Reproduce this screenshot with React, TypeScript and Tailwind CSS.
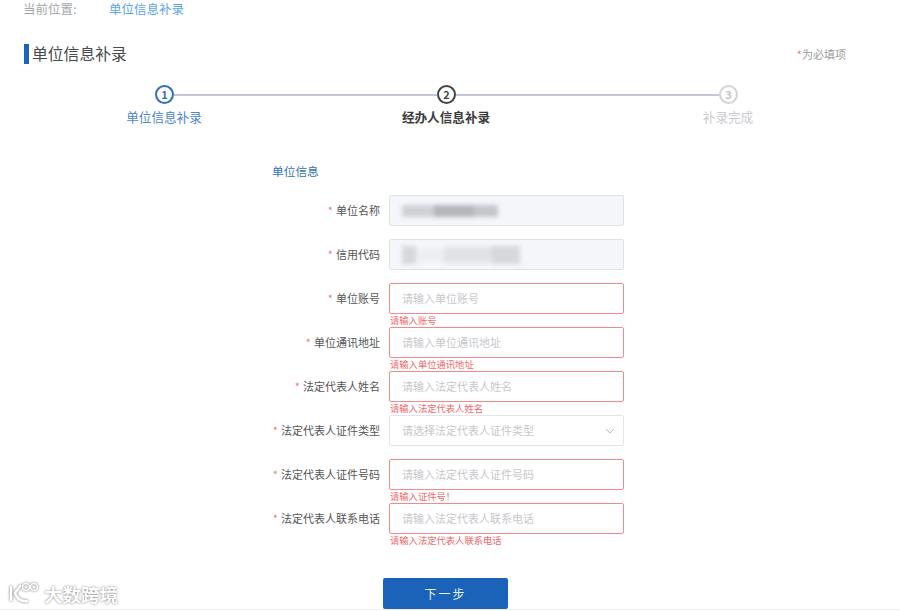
const fields = [
  { label: '单位名称', blur: 'name' },
  { label: '信用代码', blur: 'code' },
  { label: '单位账号', placeholder: '请输入单位账号', error: '请输入账号' },
  { label: '单位通讯地址', placeholder: '请输入单位通讯地址', error: '请输入单位通讯地址' },
  { label: '法定代表人姓名', placeholder: '请输入法定代表人姓名', error: '请输入法定代表人姓名' },
  { label: '法定代表人证件类型', placeholder: '请选择法定代表人证件类型', select: true },
  { label: '法定代表人证件号码', placeholder: '请输入法定代表人证件号码', error: '请输入证件号！' },
  { label: '法定代表人联系电话', placeholder: '请输入法定代表人联系电话', error: '请输入法定代表人联系电话' },
];

function StepDot({ n, className }: { n: number; className: string }) {
  return (
    <div className={`flex h-[19px] w-[19px] shrink-0 items-center justify-center rounded-full border-2 text-[11px] font-bold leading-none ${className}`}>
      {n}
    </div>
  );
}

function Field({ field }: { field: (typeof fields)[number] }) {
  const boxClass = field.blur
    ? 'border-[#dfe3e8] bg-[#f4f6f9]'
    : field.error
      ? 'border-[#f28b8b] bg-white'
      : 'border-[#e3e5e8] bg-white';

  return (
    <div className="flex h-[44px] items-start">
      <div className="flex h-[31px] w-[117px] items-center justify-end whitespace-nowrap text-[11px] text-[#555]">
        <span className="mr-[3px] text-[#ef7b7b]">*</span>
        {field.label}
      </div>
      <div className="ml-[9px] w-[235px]">
        <div className={`flex h-[31px] items-center justify-between rounded-[2px] border pl-[12px] pr-[8px] text-[11px] text-[#c6c8cc] ${boxClass}`}>
          {field.blur === 'name' && (
            <div className="flex h-[12px] items-center blur-[2px]">
              <div className="h-[12px] w-[32px] bg-[#cfd1d6]" />
              <div className="h-[12px] w-[40px] bg-[#b4b6bb]" />
              <div className="h-[12px] w-[24px] bg-[#c4c6cb]" />
            </div>
          )}
          {field.blur === 'code' && (
            <div className="flex h-[18px] items-center blur-[2px]">
              <div className="h-[18px] w-[14px] bg-[#d6d8dc]" />
              <div className="h-[12px] w-[28px] bg-[#eceef1]" />
              <div className="h-[16px] w-[48px] bg-[#e0e2e6]" />
              <div className="h-[18px] w-[28px] bg-[#d6d8dc]" />
            </div>
          )}
          {field.placeholder}
          {field.select && (
            <svg width="10" height="6" viewBox="0 0 10 6" fill="none" stroke="#b9bbc0" strokeWidth="1">
              <path d="M1 1l4 4 4-4" />
            </svg>
          )}
        </div>
        {field.error && (
          <div className="whitespace-nowrap pl-[1px] text-[9.3px] leading-[12px] text-[#f0686c]">{field.error}</div>
        )}
      </div>
    </div>
  );
}

export default function App() {
  return (
    <div className="relative h-[611px] w-[900px] overflow-hidden bg-white font-['Noto_Sans_CJK_SC','Noto_Sans',sans-serif]">
      {/* Breadcrumb */}
      <div className="flex h-[19px] items-center pl-[23px] text-[12.5px]">
        <span className="w-[86px] text-[#a3a6ab]">当前位置:</span>
        <span className="text-[#5ba4ec]">单位信息补录</span>
      </div>

      {/* Title */}
      <div className="mt-[25px] flex h-[20px] items-center justify-between pl-[24px] pr-[54px]">
        <div className="flex items-center">
          <div className="h-[20px] w-[5px] bg-[#1c64b8]" />
          <span className="ml-[3px] text-[15.8px] text-[#4a4a4a]">单位信息补录</span>
        </div>
        <div className="text-[11px] text-[#9a9a9a]">
          <span className="text-[#ef7b7b]">*</span>为必填项
        </div>
      </div>

      {/* Steps */}
      <div className="ml-[155px] mt-[21px] flex w-[583px] items-center">
        <StepDot n={1} className="border-[#2f6fb8] text-[#2f6fb8]" />
        <div className="h-[2px] flex-1 bg-[#c4c7d4]" />
        <StepDot n={2} className="border-[#444] text-[#444]" />
        <div className="h-[2px] flex-1 bg-[#c4c7d4]" />
        <StepDot n={3} className="border-[#d2d4d8] text-[#c4c6ca]" />
      </div>
      <div className="ml-[23px] mt-[4px] grid w-[846px] grid-cols-3 text-center text-[12.6px] leading-[18px]">
        <span className="text-[#4d87c7]">单位信息补录</span>
        <span className="font-bold text-[#3c3c3c]">经办人信息补录</span>
        <span className="text-[#c9cbcf]">补录完成</span>
      </div>

      {/* Form */}
      <div className="ml-[263px] mt-[37px]">
        <div className="ml-[9px] h-[15px] text-[11.7px] leading-[15px] text-[#2f6fb8]">单位信息</div>
        <div className="mt-[17px]">
          {fields.map((field) => (
            <Field key={field.label} field={field} />
          ))}
        </div>
      </div>

      <div className="ml-[383px] mt-[31px] flex h-[31px] w-[125px] items-center justify-center rounded-[2px] bg-[#1a63b8] text-[12px] tracking-[2px] text-[#e8eff8]">
        下一步
      </div>
      <div className="h-[1px] bg-[#eceef0]" />

      {/* Watermark */}
      <div className="absolute bottom-[4px] left-[8px] flex items-center">
        <svg width="34" height="26" viewBox="0 0 34 26" fill="none" stroke="#fff" strokeWidth="2.6" className="drop-shadow-[0_0_1px_#666]">
          <path d="M3 5v15" />
          <path d="M13 4l-6 8c2 6 6 9 13 8" />
          <circle cx="18" cy="6" r="3.5" strokeWidth="1.6" />
          <circle cx="26" cy="6" r="3.5" strokeWidth="1.6" />
        </svg>
        <span className="ml-[2px] text-[18.5px] font-bold leading-[22px] text-white [text-shadow:0_0_2px_#666]">大数跨境</span>
      </div>
    </div>
  );
}
